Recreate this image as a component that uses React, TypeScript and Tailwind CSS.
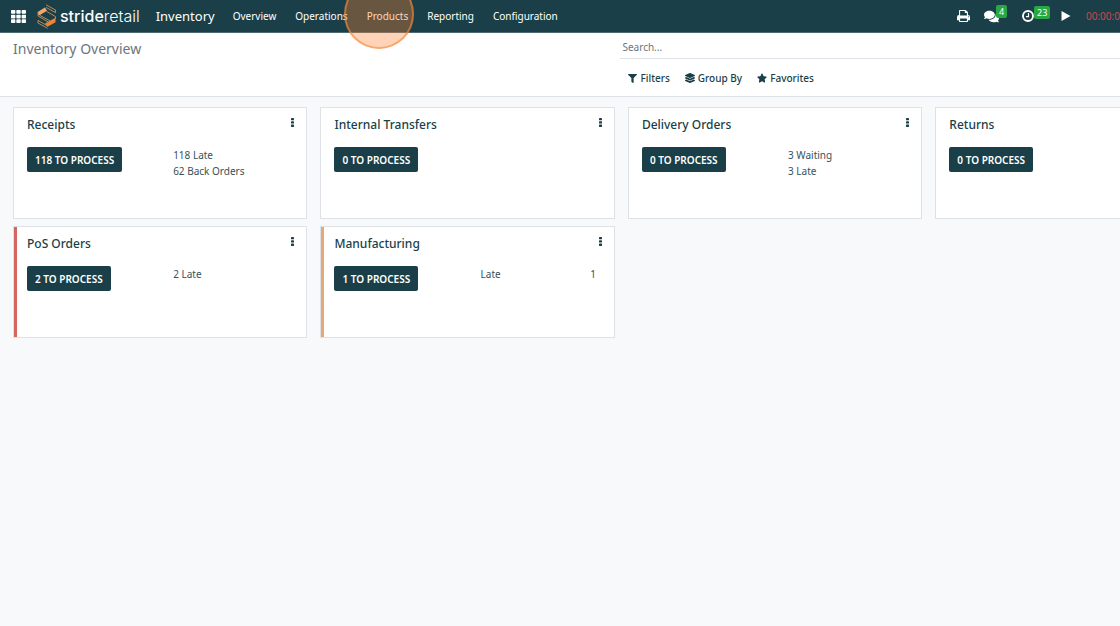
import type { ReactNode } from "react";
import { FaComments, FaFilter, FaLayerGroup, FaStar, FaTh } from "react-icons/fa";

type Operation = {
  name: string;
  count: number;
  details: string[];
  total?: number;
  accent?: string;
};

const operations: Operation[] = [
  { name: "Receipts", count: 118, details: ["118 Late", "62 Back Orders"] },
  { name: "Internal Transfers", count: 0, details: [] },
  { name: "Delivery Orders", count: 0, details: ["3 Waiting", "3 Late"] },
  { name: "Returns", count: 0, details: [] },
  { name: "PoS Orders", count: 2, details: ["2 Late"], accent: "bg-[#d5655f]" },
  { name: "Manufacturing", count: 1, details: ["Late"], total: 1, accent: "bg-[#e6a96f]" },
];

const menus = ["Overview", "Operations", "Products", "Reporting", "Configuration"];

function Logo() {
  return (
    <svg viewBox="0 0 20 25" className="h-[25px] w-5" fill="none" aria-hidden="true">
      <path d="M1 7.800 8 3.600l2 3.200-7.500 4.400L1 10.300z" fill="#f2a672" />
      <path d="M18.500 13.800v4.400l-8 4.600-2.500-3.300z" fill="#ee8236" />
      <path
        d="M9 .8 18.500 6v2.600L9 3.400M1 7.800v4.200l10 5.800M2.500 11.200l11 6M9.500 7.300l9 5.300v2M10.500 24.300 1 19v-2.600l9.500 5.600"
        stroke="#c9935a"
        strokeWidth="0.9"
      />
    </svg>
  );
}

function PrintIcon() {
  return (
    <svg viewBox="0 0 13 12" className="h-3 w-[13px]" aria-hidden="true">
      <path
        fillRule="evenodd"
        fill="currentColor"
        d="M2 .7Q2 0 2.700 0h5.600q.5 0 .9.400l1.400 1.400q.4.400.4.900V5q2 0 2 1.900v3q0 .3-.3.300H11v1.100q0 .7-.7.700H2.700Q2 12 2 11.300v-1.100H.3q-.3 0-.3-.3v-3Q0 5 2 5zM3.100 1.100v4.500h6.800V3.100H8.500q-.7 0-.7-.7V1.100zM3.100 8.400v2.500h6.800V8.400zM11.400 6.300a.5.500 0 1 0 0 1 .5.500 0 0 0 0-1z"
      />
    </svg>
  );
}

function ClockIcon() {
  return (
    <svg viewBox="0 0 12 12" className="size-3" fill="none" stroke="currentColor" aria-hidden="true">
      <circle cx="6" cy="6" r="5" strokeWidth="1.900" />
      <path d="M6.500 3v3.700H4" strokeWidth="1.200" />
    </svg>
  );
}

function KebabIcon() {
  return (
    <svg viewBox="0 0 3 9" className="h-[9px] w-[3px]" fill="currentColor" aria-hidden="true">
      <rect width="3" height="2.300" rx=".4" />
      <rect y="3.300" width="3" height="2.300" rx=".4" />
      <rect y="6.600" width="3" height="2.300" rx=".4" />
    </svg>
  );
}

function Badge({ children }: { children: ReactNode }) {
  return (
    <span className="absolute -top-1 left-3 rounded-[2px] bg-[#28a745] px-[3px] text-[9px] leading-[13px] text-white">
      {children}
    </span>
  );
}

function Header() {
  return (
    <header className="relative z-10 flex h-[33px] items-center border-b border-[#4c6a72] bg-[#1a3f49] pl-[11px] text-white">
      <button type="button" aria-label="Applications" className="shrink-0">
        <FaTh className="size-[15px]" />
      </button>
      <a href="#" className="ml-[11px] flex shrink-0 items-center gap-[3px] font-['Inter',sans-serif] text-[16px] leading-5">
        <Logo />
        <span>
          <span className="font-medium">stride</span>
          <span className="font-light">retail</span>
        </span>
      </a>
      <a href="#" className="ml-4 shrink-0 text-[13px] leading-5">
        Inventory
      </a>
      <nav className="ml-[18px] flex shrink-0 gap-[19px] text-[10px] leading-4">
        {menus.map((menu) => (
          <a key={menu} href="#" className="relative">
            {menu}
            {menu === "Products" && (
              <span className="pointer-events-none absolute -top-[29px] left-1/2 size-[70px] -translate-x-[43px] rounded-full border-2 border-[#f58b3c]/60 bg-[#fb8132]/35" />
            )}
          </a>
        ))}
      </nav>
      <div className="ml-auto flex shrink-0 items-center">
        <button type="button" aria-label="Print">
          <PrintIcon />
        </button>
        <button type="button" aria-label="Messages" className="relative ml-[14px]">
          <FaComments className="size-[15px]" />
          <Badge>4</Badge>
        </button>
        <button type="button" aria-label="Activities" className="relative ml-[23px]">
          <ClockIcon />
          <Badge>23</Badge>
        </button>
        <button type="button" aria-label="Start timer" className="ml-[27px]">
          <svg viewBox="0 0 10 10" className="size-[10px]" fill="currentColor" aria-hidden="true">
            <path d="M.5 0 9.500 5 .5 10z" />
          </svg>
        </button>
        <span className="ml-[15px] w-[34px] overflow-hidden text-[10px] leading-4 whitespace-nowrap text-[#c9484f]">
          00:00:00
        </span>
      </div>
    </header>
  );
}

function ControlPanel() {
  return (
    <section className="flex h-16 border-b border-[#dee2e6] bg-white">
      <h1 className="w-[55.4%] pt-[5px] pl-[13px] text-[14px] leading-[22px] text-[#6c757d]">Inventory Overview</h1>
      <div className="flex-1">
        <input
          type="search"
          aria-label="Search"
          placeholder="Search..."
          className="block h-[26px] w-full border-b border-[#dee2e6] px-0.5 pt-0.5 text-[10px] leading-4 outline-none placeholder:text-[#6c757d]"
        />
        <div className="mt-[11px] ml-2 flex gap-[15px] text-[10px] leading-4 font-medium text-[#1a3f49]">
          <button type="button" className="flex items-center gap-[3px]">
            <FaFilter className="size-[9px]" />
            Filters
          </button>
          <button type="button" className="flex items-center gap-[3px]">
            <FaLayerGroup className="size-[10px]" />
            Group By
          </button>
          <button type="button" className="flex items-center gap-[3px]">
            <FaStar className="size-[10px]" />
            Favorites
          </button>
        </div>
      </div>
    </section>
  );
}

function Card({ name, count, details, total, accent }: Operation) {
  return (
    <article className="relative h-28 border border-[#dee2e6] bg-white pt-[7px] pl-[13px]">
      {accent && <span className={`absolute inset-y-0 left-0 w-[3px] ${accent}`} />}
      <div className="flex items-start justify-between pr-3">
        <h2 className="text-[12px] leading-5 font-medium text-[#1a3f49]">{name}</h2>
        <button type="button" aria-label={`${name} options`} className="pt-[3px] text-[#1a3f49]">
          <KebabIcon />
        </button>
      </div>
      <div className="mt-3 grid grid-cols-[52.3%_1fr]">
        <div>
          <button
            type="button"
            className="block h-[25px] rounded-[2px] bg-[#1a3f49] px-2 text-[10px] leading-4 font-semibold whitespace-nowrap text-white"
          >
            {count} TO PROCESS
          </button>
        </div>
        <div className="flex justify-between pr-[18px] text-[10px] leading-4 text-[#36515a]">
          <ul>
            {details.map((detail) => (
              <li key={detail}>{detail}</li>
            ))}
          </ul>
          {total !== undefined && <span>{total}</span>}
        </div>
      </div>
    </article>
  );
}

export default function App() {
  return (
    <div className="min-h-screen overflow-hidden bg-[#f8f9fb] font-['Noto_Sans',sans-serif]">
      <Header />
      <ControlPanel />
      <main className="grid grid-cols-[repeat(4,26.6%)] gap-x-[13px] gap-y-[7px] pt-[10px] pl-[13px]">
        {operations.map((operation) => (
          <Card key={operation.name} {...operation} />
        ))}
      </main>
    </div>
  );
}
